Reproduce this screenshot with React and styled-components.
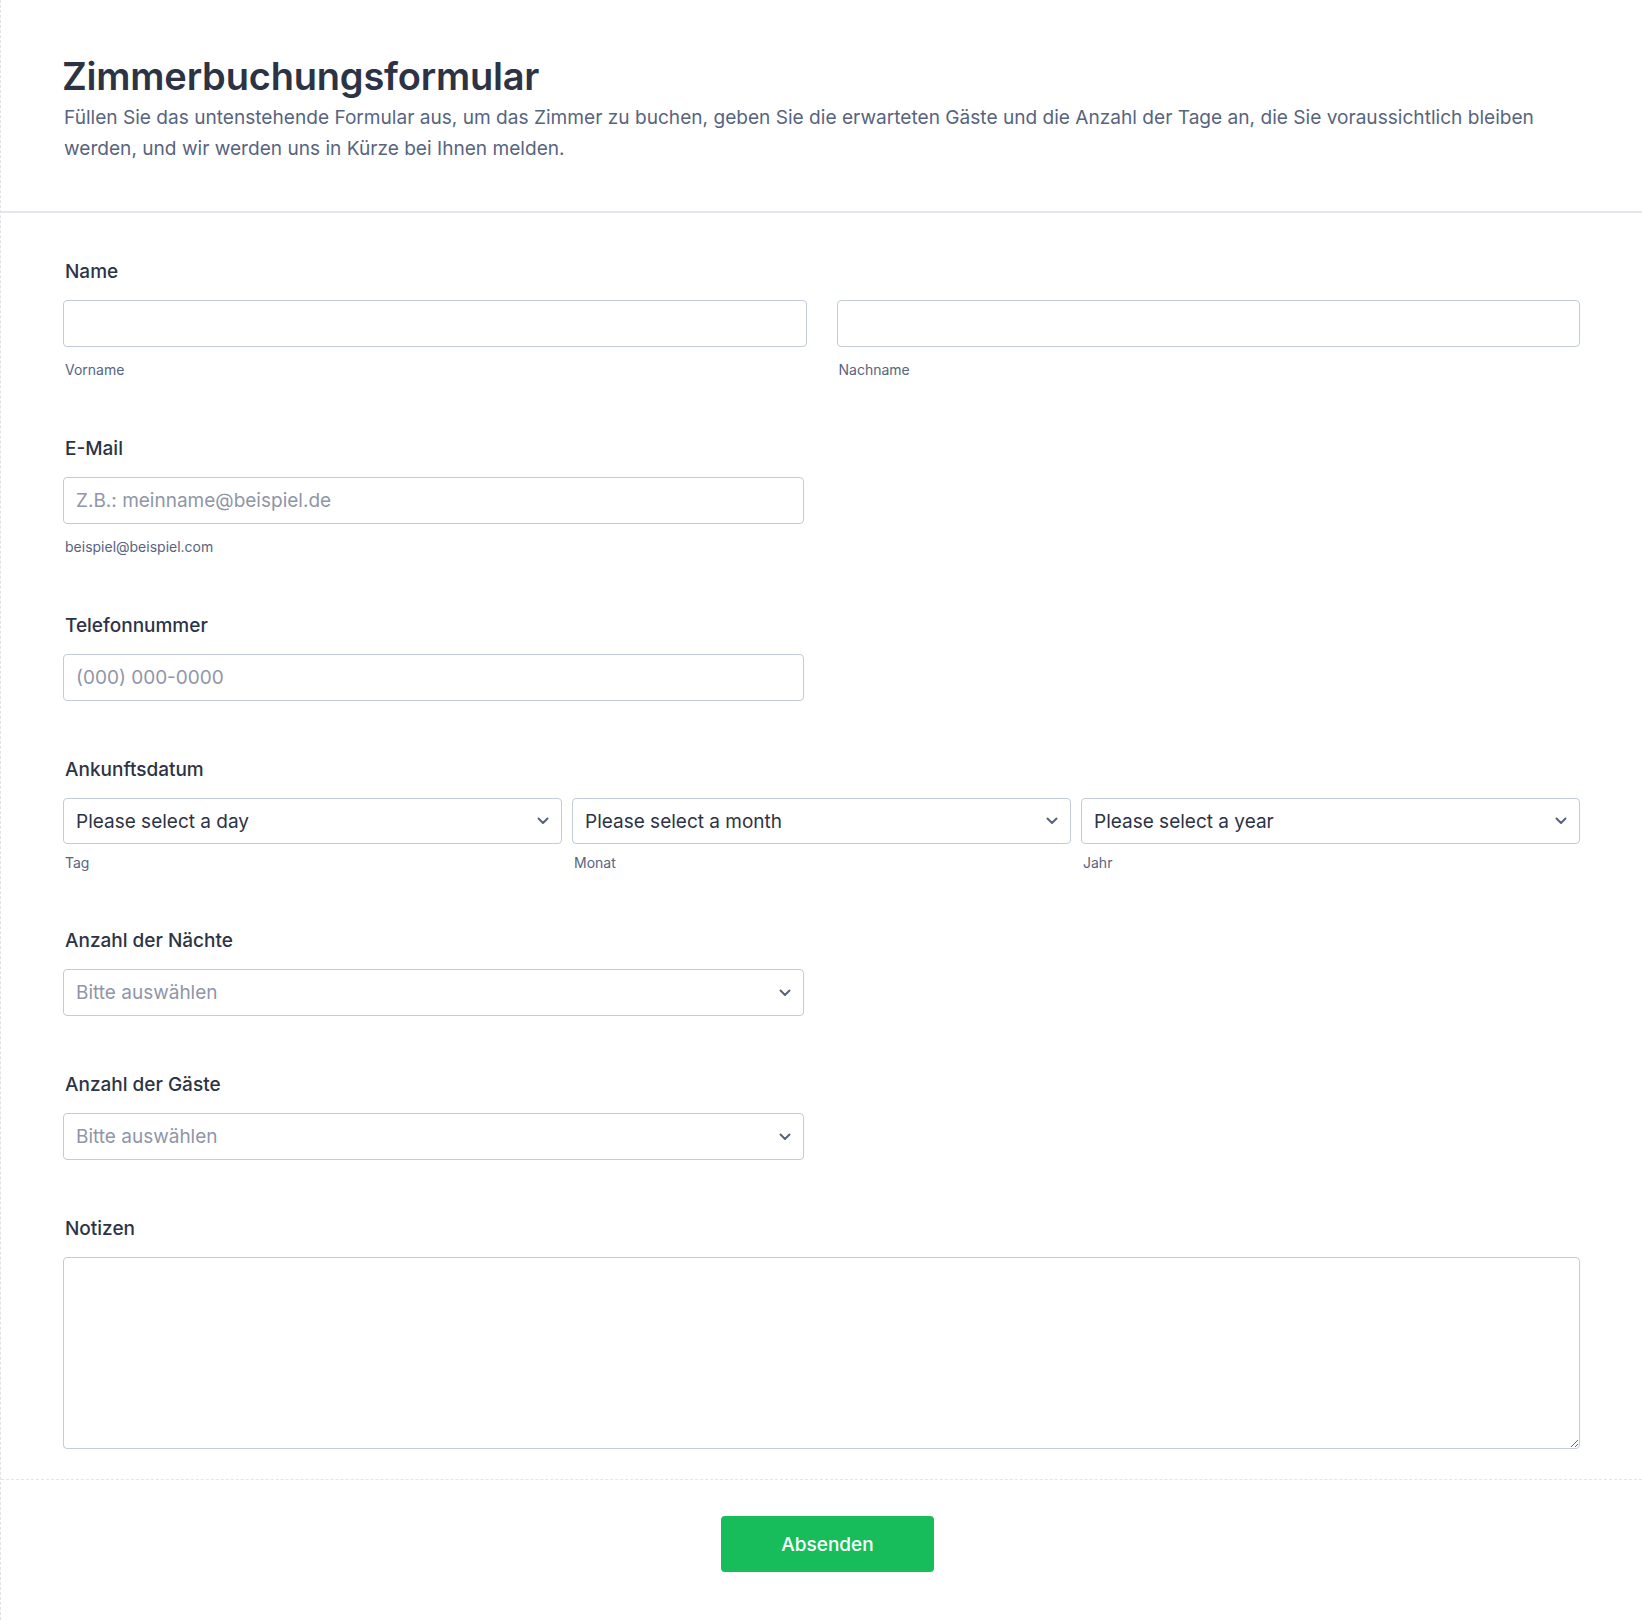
import React from "react";
import styled, { createGlobalStyle } from "styled-components";

const GlobalStyle = createGlobalStyle`
  html, body {
    margin: 0;
    padding: 0;
    background: #fff;
  }
  body {
    font-family: Inter, "Noto Sans", sans-serif;
    color: #2c3345;
  }
  * {
    box-sizing: border-box;
  }
`;

const Page = styled.div`
  min-height: 1620px;
  border-left: 1px dashed #e1e2e8;
  background: #fff;
`;

const Header = styled.header`
  padding: 52px 62px 48px 61px;
  border-bottom: 2px solid #e3e6ec;
`;

const Title = styled.h1`
  margin: 0;
  font-size: 38px;
  line-height: 48px;
  font-weight: 600;
  color: #2c3345;
  letter-spacing: -0.2px;
`;

const Description = styled.p`
  margin: 2px 0 0 2px;
  font-size: 19.1px;
  line-height: 30.5px;
  color: #57647e;
`;

const FormBody = styled.div`
  display: flex;
  flex-direction: column;
  gap: 57px;
  padding: 47px 62px 30px 62px;
  border-bottom: 1px dashed #e4e4ec;
`;

const Field = styled.div`
  display: flex;
  flex-direction: column;
`;

const Label = styled.label`
  font-size: 19px;
  line-height: 24px;
  font-weight: 500;
  color: #2c3345;
  padding-left: 2px;
  margin-bottom: 16px;
`;

const Row = styled.div`
  display: grid;
  grid-template-columns: repeat(${(p) => p.cols}, 1fr);
  gap: ${(p) => p.gap}px;
`;

const Col = styled.div`
  display: flex;
  flex-direction: column;
  width: ${(p) => p.width || "auto"};
`;

const Input = styled.input`
  height: 47px;
  width: 100%;
  border: 1px solid #c3cad8;
  border-radius: 4px;
  padding: 0 12px;
  font-family: inherit;
  font-size: 19px;
  color: #2c3345;
  background: #fff;
  outline: none;
  &::placeholder {
    color: #8f96a7;
  }
`;

const SubLabel = styled.span`
  margin-top: ${(p) => (p.compact ? 10 : 13)}px;
  padding-left: 2px;
  font-size: 14px;
  line-height: ${(p) => (p.compact ? 18 : 20)}px;
  color: #57647e;
`;

const SelectWrap = styled.div`
  position: relative;
  width: 100%;
`;

const Select = styled.select`
  appearance: none;
  -webkit-appearance: none;
  display: block;
  width: 100%;
  height: ${(p) => p.h}px;
  border: 1px solid #c3cad8;
  border-radius: 4px;
  padding: 0 36px 0 12px;
  font-family: inherit;
  font-size: 19px;
  color: ${(p) => (p.muted ? "#8f96a7" : "#2c3345")};
  background: #fff;
  outline: none;
`;

const Chevron = styled.svg`
  position: absolute;
  right: 13px;
  top: 50%;
  width: 12px;
  height: 8px;
  margin-top: -4px;
  pointer-events: none;
`;

const TextArea = styled.textarea`
  width: 100%;
  height: 192px;
  border: 1px solid #c3cad8;
  border-radius: 4px;
  padding: 12px;
  font-family: inherit;
  font-size: 19px;
  color: #2c3345;
  outline: none;
  resize: vertical;
  display: block;
`;

const Footer = styled.div`
  display: flex;
  justify-content: center;
  padding: 36px 50px 47px 62px;
`;

const SubmitButton = styled.button`
  width: 213px;
  height: 56px;
  border: none;
  border-radius: 4px;
  background: #18bd5b;
  color: #fff;
  font-family: inherit;
  font-size: 19px;
  font-weight: 500;
  cursor: pointer;
`;

function SelectBox({ placeholder, muted, h = 47 }) {
  return (
    <SelectWrap>
      <Select muted={muted} h={h} defaultValue="">
        <option value="">{placeholder}</option>
      </Select>
      <Chevron viewBox="0 0 12 8">
        <path
          d="M1.5 1.5 L6 6 L10.5 1.5"
          fill="none"
          stroke="#57647e"
          strokeWidth="2"
          strokeLinecap="round"
          strokeLinejoin="round"
        />
      </Chevron>
    </SelectWrap>
  );
}

export default function App() {
  return (
    <Page>
      <GlobalStyle />
      <Header>
        <Title>Zimmerbuchungsformular</Title>
        <Description>
          Füllen Sie das untenstehende Formular aus, um das Zimmer zu buchen, geben Sie die
          erwarteten Gäste und die Anzahl der Tage an, die Sie voraussichtlich bleiben werden,
          und wir werden uns in Kürze bei Ihnen melden.
        </Description>
      </Header>

      <FormBody>
        <Field>
          <Label>Name</Label>
          <Row cols={2} gap={30}>
            <Col>
              <Input type="text" />
              <SubLabel>Vorname</SubLabel>
            </Col>
            <Col>
              <Input type="text" />
              <SubLabel>Nachname</SubLabel>
            </Col>
          </Row>
        </Field>

        <Field>
          <Label>E-Mail</Label>
          <Col width="741px">
            <Input type="email" placeholder="Z.B.: meinname@beispiel.de" />
            <SubLabel>beispiel@beispiel.com</SubLabel>
          </Col>
        </Field>

        <Field>
          <Label>Telefonnummer</Label>
          <Col width="741px">
            <Input type="tel" placeholder="(000) 000-0000" />
          </Col>
        </Field>

        <Field>
          <Label>Ankunftsdatum</Label>
          <Row cols={3} gap={10}>
            <Col>
              <SelectBox placeholder="Please select a day" h={46} />
              <SubLabel compact>Tag</SubLabel>
            </Col>
            <Col>
              <SelectBox placeholder="Please select a month" h={46} />
              <SubLabel compact>Monat</SubLabel>
            </Col>
            <Col>
              <SelectBox placeholder="Please select a year" h={46} />
              <SubLabel compact>Jahr</SubLabel>
            </Col>
          </Row>
        </Field>

        <Field>
          <Label>Anzahl der Nächte</Label>
          <Col width="741px">
            <SelectBox placeholder="Bitte auswählen" muted />
          </Col>
        </Field>

        <Field>
          <Label>Anzahl der Gäste</Label>
          <Col width="741px">
            <SelectBox placeholder="Bitte auswählen" muted />
          </Col>
        </Field>

        <Field>
          <Label>Notizen</Label>
          <TextArea />
        </Field>
      </FormBody>

      <Footer>
        <SubmitButton type="submit">Absenden</SubmitButton>
      </Footer>
    </Page>
  );
}
